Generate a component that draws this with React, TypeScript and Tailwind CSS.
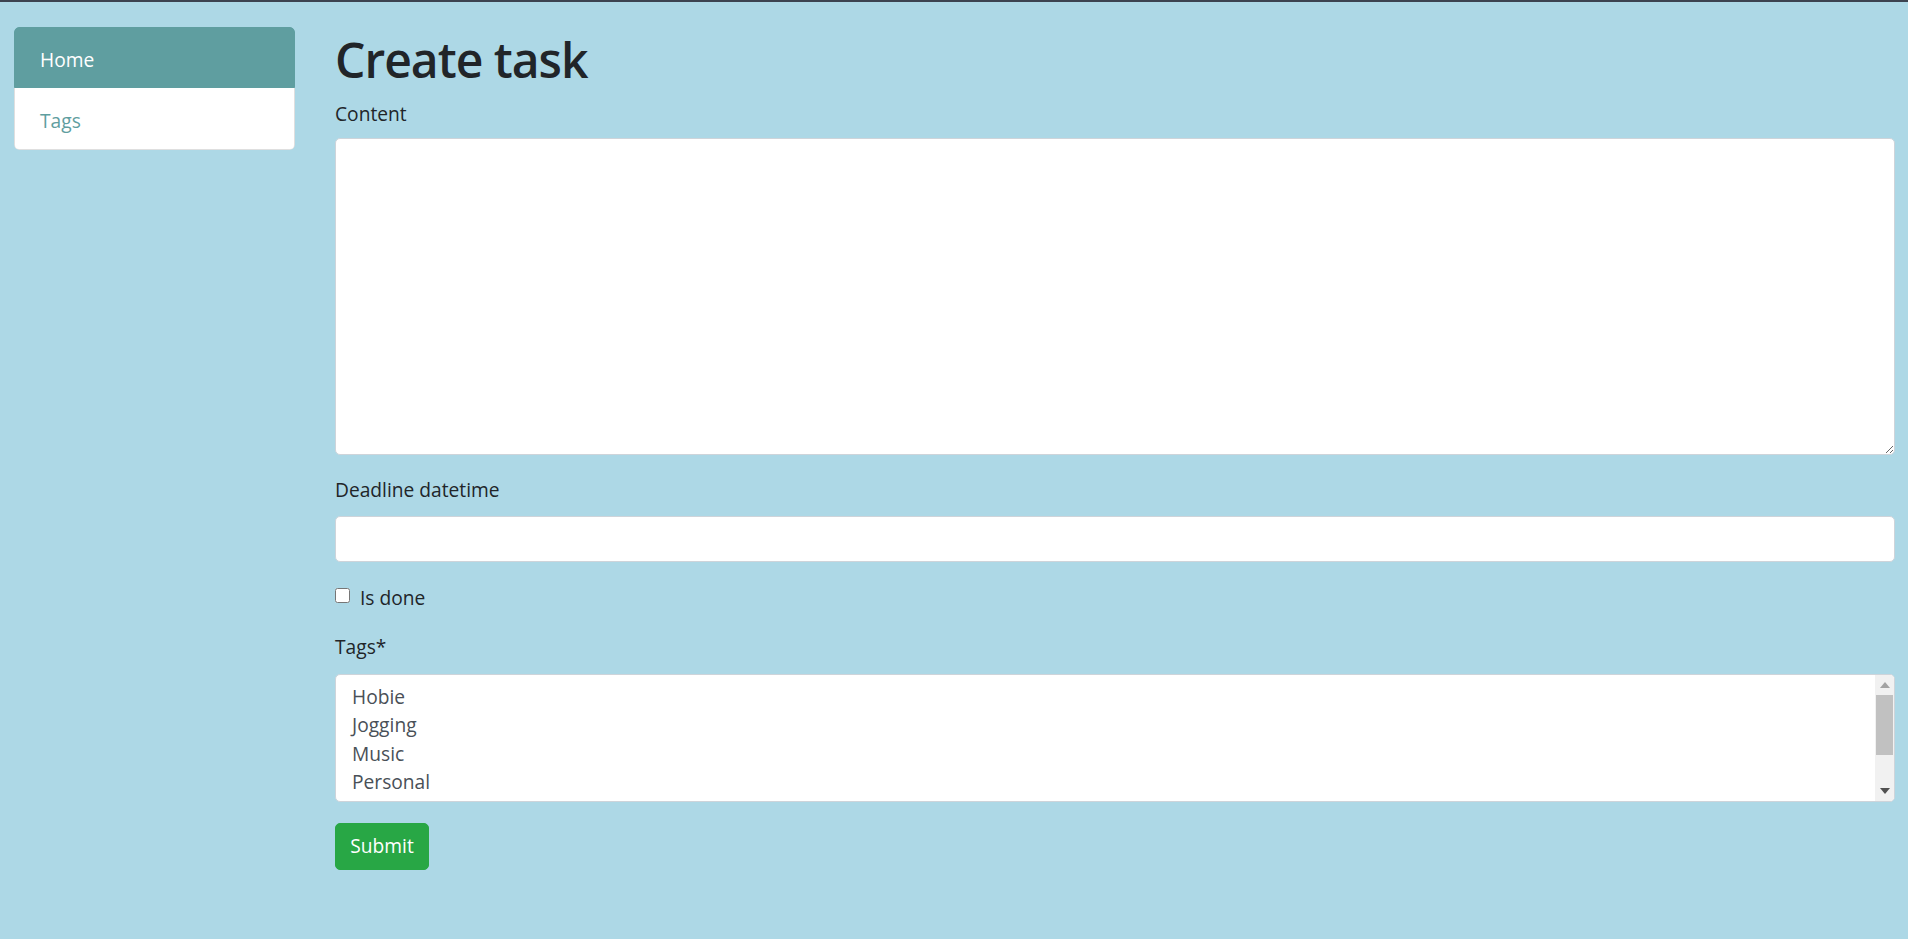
import { useState } from "react";

const tags = ["Hobie", "Jogging", "Music", "Personal", "Study"];

const App = () => {
  const [content, setContent] = useState("");
  const [deadline, setDeadline] = useState("");
  const [isDone, setIsDone] = useState(false);

  return (
    <div className="min-h-screen w-full bg-[#add8e6] border-t-2 border-[#3c4350] font-['Open_Sans',sans-serif] text-[19.2px] text-[#212529]">
      <div className="flex items-start gap-[40px] pl-[14px] pr-[13px]">
        {/* Sidebar */}
        <aside className="w-[281px] shrink-0 pt-[25px]">
          <div className="flex flex-col rounded-[5px] overflow-hidden">
            <a className="flex items-center h-[61px] px-[25px] pt-[5px] bg-[#5f9ea0] border border-[#5f9ea0] rounded-t-[5px] text-white">
              Home
            </a>
            <a className="flex items-center h-[62px] px-[25px] pt-[5px] bg-white border border-t-0 border-[rgba(0,0,0,0.125)] rounded-b-[5px] text-[#5f9ea0]">
              Tags
            </a>
          </div>
        </aside>

        {/* Main */}
        <main className="flex-1 pt-[29px]">
          <h1 className="text-[48px] leading-[1.2] font-semibold tracking-[-1px] mb-[11px]">Create task</h1>

          <form onSubmit={(e) => e.preventDefault()} className="flex flex-col">
            <label className="leading-[28.8px] mb-[10px]">Content</label>
            <textarea
              value={content}
              onChange={(e) => setContent(e.target.value)}
              className="h-[317px] w-full bg-white border border-[#ced4da] rounded-[5px] px-[14px] py-[7px] text-[#495057] focus:outline-none mb-[21px]"
            />

            <label className="leading-[28.8px] mb-[11px]">Deadline datetime</label>
            <input
              type="text"
              value={deadline}
              onChange={(e) => setDeadline(e.target.value)}
              className="h-[46px] w-full bg-white border border-[#ced4da] rounded-[5px] px-[14px] text-[#495057] focus:outline-none mb-[22px]"
            />

            <label className="flex items-center gap-[10px] leading-[28.8px] mb-[20px]">
              <input
                type="checkbox"
                checked={isDone}
                onChange={(e) => setIsDone(e.target.checked)}
                className="w-[15px] h-[15px] m-0 -mt-[6px]"
              />
              Is done
            </label>

            <label className="leading-[28.8px] mb-[12px]">Tags*</label>
            <div className="flex h-[128px] w-full bg-white border border-[#ced4da] rounded-[5px] overflow-hidden mb-[21px]">
              <div className="flex-1 pl-[16px] pt-[8px] text-[#495057] leading-[28.4px] overflow-hidden">
                {tags.map((t) => (
                  <div key={t}>{t}</div>
                ))}
              </div>
              {/* scrollbar */}
              <div className="w-[19px] bg-[#f1f1f1] flex flex-col items-center">
                <div className="h-[20px] flex items-center justify-center">
                  <svg width="10" height="6" viewBox="0 0 10 6">
                    <path d="M5 0 L10 6 L0 6 Z" fill="#a3a3a3" />
                  </svg>
                </div>
                <div className="w-[17px] h-[60px] bg-[#c1c1c1]" />
                <div className="flex-1" />
                <div className="h-[20px] flex items-center justify-center">
                  <svg width="10" height="6" viewBox="0 0 10 6">
                    <path d="M0 0 L10 0 L5 6 Z" fill="#505050" />
                  </svg>
                </div>
              </div>
            </div>

            <div>
              <button
                type="submit"
                className="h-[47px] w-[94px] bg-[#28a745] border border-[#28a745] rounded-[5px] text-white"
              >
                Submit
              </button>
            </div>
          </form>
        </main>
      </div>
    </div>
  );
};

export default App;
